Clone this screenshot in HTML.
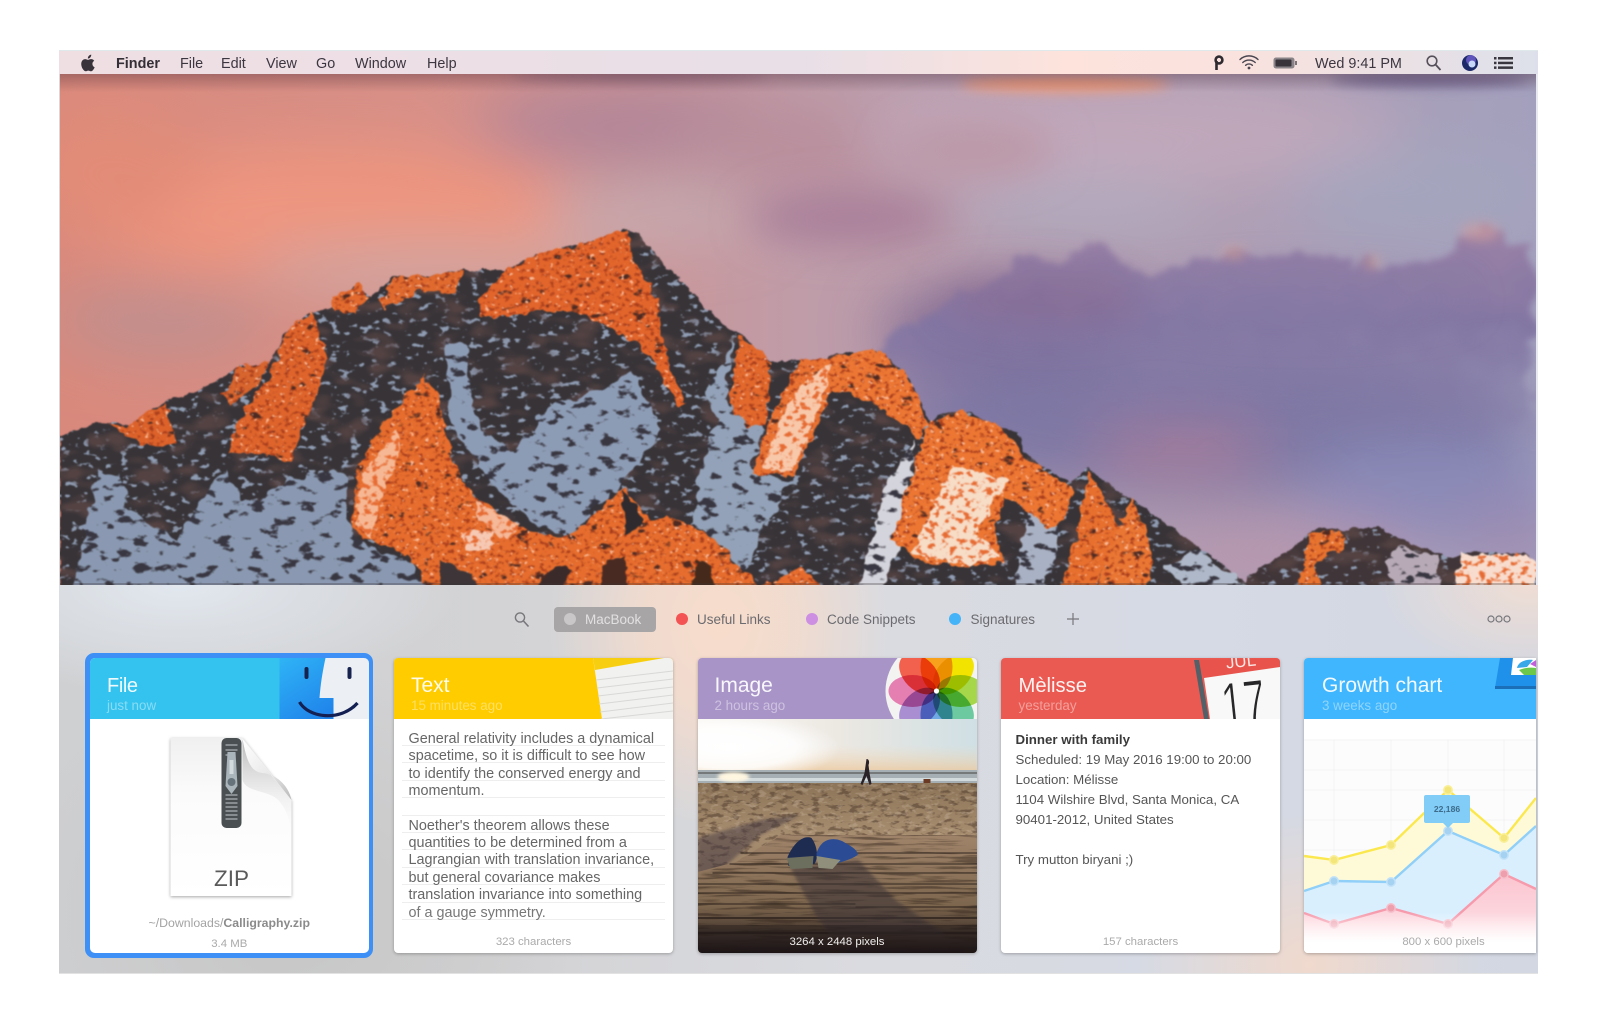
<!DOCTYPE html>
<html><head><meta charset="utf-8"><title>Finder</title>
<style>
html,body{margin:0;padding:0;background:#fff;width:1600px;height:1015px;overflow:hidden}
body{position:relative;font-family:"Liberation Sans",sans-serif}
.a{position:absolute;white-space:nowrap}
#bar{position:absolute;left:59px;top:50px;width:1479px;height:24px;background:linear-gradient(90deg,#efdfe3 0,#ecdfe6 30%,#e8dfe7 50%,#fde3dc 68%,#fae2de 80%,#dde0ea 100%);border-top:1px solid #dfe8ea;box-sizing:border-box}
.m{position:absolute;top:55px;font-size:14.4px;line-height:18px;color:#3c3640;white-space:nowrap}
#panel{position:absolute;left:59px;top:585px;width:1479px;height:389px;overflow:hidden;border-bottom:1px solid #e2e2e2;box-sizing:border-box;
background:
radial-gradient(ellipse 170px 200px at 660px 40px,#f8dccb 0,rgba(248,220,203,.75) 45%,rgba(248,220,203,0) 100%),
radial-gradient(ellipse 170px 150px at 1250px 380px,#f0d9cd 0,rgba(240,217,205,0) 100%),
radial-gradient(ellipse 150px 90px at 1470px 0,#efddd4 0,rgba(239,221,212,0) 100%),
radial-gradient(ellipse 280px 110px at 120px 0,#e2e8ef 0,rgba(226,232,239,0) 100%),
radial-gradient(ellipse 300px 260px at 230px 330px,#c6c6c6 0,rgba(198,198,198,0) 100%),
linear-gradient(90deg,#cfd0d2 0,#d3d3d5 30%,#dadbe0 55%,#d6dae4 75%,#d3d7e1 100%)}
.card{position:absolute;top:658px;width:279px;height:295px;background:#fff;border-radius:4px;overflow:hidden;box-shadow:0 1px 3px rgba(0,0,0,.28)}
.hd{position:absolute;left:0;top:0;width:100%;height:61px;overflow:hidden}
.t{position:absolute;left:19px;top:14px;font-size:21px;line-height:28px;color:#fff;white-space:nowrap;opacity:.93}
.s{position:absolute;left:19px;top:40px;font-size:13.4px;line-height:16px;color:rgba(255,255,255,.42);white-space:nowrap}
.f{position:absolute;left:0;width:100%;text-align:center;top:276px;font-size:11.4px;line-height:16px;color:#aaa;white-space:nowrap}
.l{position:absolute;left:14.5px;font-size:14.4px;line-height:17px;color:#666;white-space:nowrap}
.e{position:absolute;left:14.5px;font-size:13.3px;line-height:18px;color:#555;white-space:nowrap}
.r{position:absolute;left:8px;width:263px;height:1px;background:#eeeeee}
.tb{position:absolute;top:611px;font-size:13.5px;line-height:18px;color:#6b6b70;white-space:nowrap}
.d{position:absolute;top:613px;width:12px;height:12px;border-radius:50%}
</style></head>
<body style="filter:blur(.35px)">

<svg class="a" style="left:0;top:0" width="1600" height="600" viewBox="0 0 1600 600">
<defs>
<clipPath id="hc"><rect x="60" y="74" width="1476" height="511"/></clipPath>
<linearGradient id="sky" x1="0" x2="1" y1="0" y2="0"><stop offset="0" stop-color="#d9897c"/><stop offset=".3" stop-color="#d6918a"/><stop offset=".5" stop-color="#bf9ca8"/><stop offset="1" stop-color="#a3a0bd"/></linearGradient>
<linearGradient id="cl" x1="0" x2="0" y1="0" y2="1"><stop offset="0" stop-color="#9c82a6"/><stop offset=".45" stop-color="#8276a3"/><stop offset="1" stop-color="#7f78a4" stop-opacity="0"/></linearGradient>
<linearGradient id="topd" x1="0" x2="0" y1="0" y2="1"><stop offset="0" stop-color="#3c1e30" stop-opacity=".32"/><stop offset="1" stop-color="#3c1e30" stop-opacity="0"/></linearGradient>
<filter id="b30" x="-50%" y="-100%" width="200%" height="300%"><feGaussianBlur stdDeviation="30"/></filter>
<filter id="b18" x="-50%" y="-100%" width="200%" height="300%"><feGaussianBlur stdDeviation="20"/></filter>
<filter id="b6" x="-50%" y="-200%" width="200%" height="500%"><feGaussianBlur stdDeviation="6"/></filter>
<filter id="cloud" x="-10%" y="-20%" width="120%" height="140%"><feTurbulence type="fractalNoise" baseFrequency=".035" numOctaves="4" seed="4"/><feDisplacementMap in="SourceGraphic" scale="38" xChannelSelector="R" yChannelSelector="G"/><feGaussianBlur stdDeviation="3.5"/></filter>
<filter id="rg" x="-10%" y="-10%" width="120%" height="120%"><feTurbulence type="fractalNoise" baseFrequency=".1" numOctaves="2" seed="7"/><feDisplacementMap in="SourceGraphic" scale="9" xChannelSelector="R" yChannelSelector="G"/></filter>
<filter id="edge" x="-5%" y="-5%" width="110%" height="110%" color-interpolation-filters="sRGB">
<feTurbulence type="fractalNoise" baseFrequency=".1" numOctaves="3" seed="2" result="n"/>
<feDisplacementMap in="SourceGraphic" in2="n" scale="6" xChannelSelector="R" yChannelSelector="G" result="d"/>
<feTurbulence type="fractalNoise" baseFrequency=".1 .16" numOctaves="3" seed="11" result="t"/>
<feColorMatrix in="t" type="matrix" values="0 0 0 0 .56  0 0 0 0 .61  0 0 0 0 .7  14 0 0 0 -8.7" result="sn"/>
<feComposite in="sn" in2="d" operator="atop" result="o"/>
<feTurbulence type="fractalNoise" baseFrequency=".03 .06" numOctaves="2" seed="17" result="t2"/>
<feColorMatrix in="t2" type="matrix" values="0 0 0 0 .33  0 0 0 0 .26  0 0 0 0 .26  4 0 0 0 -2" result="br"/>
<feComposite in="br" in2="o" operator="atop"/>
</filter>
<filter id="snow" x="-5%" y="-5%" width="110%" height="110%" color-interpolation-filters="sRGB">
<feTurbulence type="fractalNoise" baseFrequency=".07" numOctaves="2" seed="6" result="n"/>
<feDisplacementMap in="SourceGraphic" in2="n" scale="14" xChannelSelector="R" yChannelSelector="G" result="d"/>
<feTurbulence type="fractalNoise" baseFrequency=".06 .11" numOctaves="4" seed="21" result="t"/>
<feColorMatrix in="t" type="matrix" values="0 0 0 0 .22  0 0 0 0 .21  0 0 0 0 .25  12 0 0 0 -7" result="dk"/>
<feComposite in="dk" in2="d" operator="atop"/>
</filter>
<filter id="face" x="-10%" y="-10%" width="120%" height="120%" color-interpolation-filters="sRGB">
<feTurbulence type="fractalNoise" baseFrequency=".09" numOctaves="2" seed="3" result="n"/>
<feDisplacementMap in="SourceGraphic" in2="n" scale="11" xChannelSelector="R" yChannelSelector="G" result="d"/>
<feTurbulence type="fractalNoise" baseFrequency=".2 .26" numOctaves="3" seed="8" result="t"/>
<feColorMatrix in="t" type="matrix" values="0 0 0 0 .66  0 0 0 0 .24  0 0 0 0 .11  6 0 0 0 -3.3" result="dk"/>
<feComposite in="dk" in2="d" operator="atop" result="o"/>
<feTurbulence type="fractalNoise" baseFrequency=".06 .1" numOctaves="3" seed="41" result="t3"/>
<feColorMatrix in="t3" type="matrix" values="0 0 0 0 .3  0 0 0 0 .16  0 0 0 0 .13  10 0 0 0 -6.8" result="rk"/>
<feComposite in="rk" in2="o" operator="atop" result="o2"/>
<feTurbulence type="fractalNoise" baseFrequency=".2 .26" numOctaves="2" seed="31" result="t2"/>
<feColorMatrix in="t2" type="matrix" values="0 0 0 0 .98  0 0 0 0 .72  0 0 0 0 .58  12 0 0 0 -8" result="hl"/>
<feComposite in="hl" in2="o2" operator="atop"/>
</filter>
<filter id="pale" x="-10%" y="-10%" width="120%" height="120%" color-interpolation-filters="sRGB">
<feTurbulence type="fractalNoise" baseFrequency=".1" numOctaves="2" seed="9" result="n"/>
<feDisplacementMap in="SourceGraphic" in2="n" scale="10" xChannelSelector="R" yChannelSelector="G" result="d"/>
<feTurbulence type="fractalNoise" baseFrequency=".14 .18" numOctaves="3" seed="14" result="t"/>
<feColorMatrix in="t" type="matrix" values="0 0 0 0 .9  0 0 0 0 .42  0 0 0 0 .2  9 0 0 0 -4.9" result="dk"/>
<feComposite in="dk" in2="d" operator="atop"/>
</filter>
</defs>
<g clip-path="url(#hc)">
<rect x="60" y="74" width="1476" height="511" fill="url(#sky)"/>
<g filter="url(#b30)">
<ellipse cx="330" cy="215" rx="250" ry="70" fill="#ee957f"/>
<ellipse cx="110" cy="170" rx="90" ry="60" fill="#e28c78"/>
<ellipse cx="640" cy="125" rx="170" ry="38" fill="#b08498"/>
<ellipse cx="440" cy="272" rx="190" ry="30" fill="#cfa6a2"/>
<ellipse cx="650" cy="215" rx="110" ry="24" fill="#c5adb4"/>
<ellipse cx="160" cy="320" rx="110" ry="36" fill="#bf8f8f"/>
<ellipse cx="800" cy="150" rx="130" ry="44" fill="#b98f9c"/>
<ellipse cx="1130" cy="135" rx="270" ry="50" fill="#c1a8bb"/>
<ellipse cx="1420" cy="190" rx="130" ry="45" fill="#a4a5be"/>
<ellipse cx="1080" cy="210" rx="130" ry="26" fill="#aeaabf"/>
</g>
<g filter="url(#b18)">
<ellipse cx="850" cy="218" rx="100" ry="26" fill="#a97f9a"/>
<ellipse cx="975" cy="150" rx="80" ry="26" fill="#bb97a6"/>
</g>
<g filter="url(#b6)">
<ellipse cx="1065" cy="84" rx="105" ry="8" fill="#ee9a78"/>
<ellipse cx="1430" cy="80" rx="100" ry="7" fill="#7a7098"/>
<ellipse cx="640" cy="76" rx="130" ry="3" fill="#8a6478"/>
</g>
<g filter="url(#b30)">
<ellipse cx="1210" cy="420" rx="320" ry="80" fill="#7e78a4"/>
<ellipse cx="1180" cy="445" rx="90" ry="32" fill="#a27b9b"/>
<ellipse cx="1430" cy="490" rx="130" ry="50" fill="#8a8ab8"/>
<ellipse cx="1290" cy="555" rx="130" ry="36" fill="#b897ae"/>
<ellipse cx="1510" cy="540" rx="60" ry="30" fill="#a08cb0"/>
<ellipse cx="1000" cy="330" rx="120" ry="34" fill="#74608e"/>
</g>
<polygon filter="url(#cloud)" fill="url(#cl)" points="880,345 915,325 968,293 1000,270 1030,253 1060,268 1090,240 1105,238 1126,270 1160,268 1200,258 1234,247 1260,258 1310,252 1345,262 1371,257 1400,270 1440,255 1484,222 1510,238 1536,242 1536,450 870,450"/>
<g filter="url(#b18)" opacity=".55">
<ellipse cx="1050" cy="300" rx="110" ry="28" fill="#86688f"/>
<ellipse cx="1300" cy="300" rx="170" ry="26" fill="#867ca6"/>
</g>
<g filter="url(#b6)" opacity=".7"><ellipse cx="1234" cy="253" rx="11" ry="4" fill="#f0b090"/><ellipse cx="1372" cy="262" rx="7" ry="6" fill="#d8a090"/><ellipse cx="1480" cy="232" rx="20" ry="9" fill="#cf9c9e"/></g>
<rect x="60" y="74" width="1476" height="18" fill="url(#topd)"/>

<g style="filter:blur(.7px)">
<!-- far right range -->
<polygon filter="url(#edge)" fill="#403538" points="1240,590 1249,575 1290,550 1318,527 1341,530 1379,527 1402,540 1438,553 1453,557 1463,552 1524,553 1536,563 1540,590"/>
<polygon filter="url(#snow)" fill="#b7aab6" points="1385,565 1402,545 1438,558 1440,590 1395,590"/>
<polygon filter="url(#pale)" fill="#f8dccd" points="1452,590 1463,553 1524,554 1537,565 1537,590"/>
<polygon filter="url(#face)" fill="#e8732f" points="1297,590 1310,533 1341,530 1346,549 1316,560 1320,590"/>

<!-- main massif -->
<polygon filter="url(#edge)" fill="#373337" points="60,436 97,423 130,425 166,400 194,393 240,367 270,363 286,333 311,312 327,310 342,300 357,285 370,298 393,277 434,275 462,270 505,270 541,253 587,243 625,230 638,233 663,263 699,300 730,330 742,335 770,362 800,360 815,370 830,357 869,350 892,360 910,380 930,423 938,415 963,410 999,427 1019,433 1024,453 1070,483 1088,468 1126,497 1137,502 1198,547 1249,585 1249,592 60,592"/>

<!-- snow fields -->
<polygon filter="url(#snow)" fill="#8a99b1" points="72,592 84,530 98,470 120,476 130,510 175,540 200,500 226,470 240,500 262,500 290,480 320,470 345,475 350,530 372,548 410,562 430,592"/>
<polygon filter="url(#snow)" fill="#8d9cb5" points="445,340 465,345 470,390 483,432 515,452 550,405 590,395 632,372 662,430 620,487 567,538 530,522 490,482 452,425"/>
<polygon filter="url(#snow)" fill="#93a2b8" points="733,343 707,385 716,420 700,470 693,525 745,572 790,480 752,470 762,425 725,400"/>
<polygon filter="url(#snow)" fill="#aeb8c8" points="1165,565 1198,548 1249,590 1185,590"/>
<polygon filter="url(#snow)" fill="#d4d4dc" points="858,588 885,488 915,440 905,540 880,590"/>
<polygon filter="url(#snow)" fill="#a9b2c4" points="1030,500 1062,492 1055,560 1040,590 1015,590"/>

<!-- lit faces -->
<g filter="url(#face)">
<polygon fill="#dc622a" points="125,427 166,403 176,445 148,447 108,425"/>
<polygon fill="#de642b" points="226,452 245,408 270,377 286,333 311,312 327,350 316,400 301,430 291,460 255,453"/>
<polygon fill="#d8652e" points="240,367 270,363 262,380 232,405 222,395"/>
<polygon fill="#e26a2e" points="332,298 357,285 370,298 356,312 335,312"/>
<polygon fill="#e06a2e" points="380,300 393,277 434,275 462,270 455,295 420,290 385,310"/>
<polygon fill="#e66d2d" points="352,527 357,467 388,417 423,377 439,393 449,450 470,493 507,523 550,537 570,537 623,488 650,520 667,515 703,530 717,543 750,577 760,592 430,592 408,555 367,540"/>
<polygon fill="#e2652b" points="478,300 510,267 541,253 587,243 625,230 635,265 657,300 660,333 673,377 688,403 680,407 670,393 653,360 637,343 607,325 573,313 540,310 503,317 483,317"/>
<polygon fill="#e2682c" points="728,405 740,335 772,362 766,425 748,425"/>
<polygon fill="#e97232" points="753,473 773,413 787,383 800,360 840,357 823,413 793,477"/>
<polygon fill="#ec7633" points="802,383 818,370 830,357 869,350 892,360 910,380 928,423 920,437 892,417 861,397 830,390 810,385"/>
<polygon fill="#ec7632" points="892,540 928,423 963,410 1004,428 1019,453 1073,490 1065,520 1050,527 1004,497 994,533 1004,563 968,567 922,563"/>
<polygon fill="#e8702e" points="1060,592 1078,533 1088,470 1111,507 1121,533 1093,592"/>
<polygon fill="#ea7633" points="1096,592 1111,547 1132,497 1152,547 1147,592"/>
<polygon fill="#e66c2e" points="750,592 790,572 803,567 820,583 825,592"/>
</g>
<g filter="url(#pale)">
<polygon fill="#f8c8aa" points="762,470 780,420 800,385 832,362 818,410 792,472"/>
<polygon fill="#f7dcc6" points="912,553 953,465 1009,480 975,533 1002,555 968,565"/>
<polygon fill="#f6b894" points="356,525 362,478 395,430 402,445 380,500 372,540"/>
<polygon fill="#f6c9b4" points="462,532 492,530 490,550 464,552"/>
<polygon fill="#f5b898" points="475,500 520,525 505,540 478,520"/>
</g>
<g filter="url(#rg)" fill="#2f2a2e">
<polygon points="623,489 642,518 636,530 625,535"/>
<polygon points="533,592 555,566 572,570 560,592" fill="#3b2c2a"/>
<polygon points="600,592 606,560 626,557 628,592" fill="#4a2a22"/>
<polygon points="690,592 698,560 712,565 714,592" fill="#44291f"/>
<polygon points="440,592 440,560 470,575 480,592" fill="#3d3438"/>
</g>
</g>
<rect x="60" y="583" width="1476" height="2" fill="#3a3436" opacity=".3"/>
</g>
</svg>

<div style="position:absolute;left:59px;top:74px;width:1px;height:511px;background:#d8d8dc"></div>
<div style="position:absolute;left:1536px;top:74px;width:2px;height:511px;background:#e8e8f0"></div>

<div id="bar"></div>
<svg class="a" style="left:78px;top:53px" width="20" height="20" viewBox="0 0 24 24"><path fill="#38323a" d="M18.7 19.5c-.8 1.2-1.7 2.4-3 2.4-1.4 0-1.8-.8-3.3-.8-1.6 0-2 .8-3.3.8-1.4 0-2.4-1.3-3.2-2.5C4.2 17 3 12.7 4.7 9.7c.9-1.5 2.4-2.4 4-2.4 1.3 0 2.5.9 3.3.9.8 0 2.2-1.1 3.8-.9.7 0 2.5.3 3.7 2-.1.1-2.2 1.3-2.2 3.8 0 3 2.6 4 2.6 4 0 .1-.4 1.4-1.2 2.4zM13 3.5c.7-.8 1.9-1.5 2.9-1.5.1 1.2-.4 2.4-1.1 3.2-.7.8-1.8 1.5-3 1.4-.1-1.2.5-2.4 1.2-3.1z"/></svg>
<div class="m" style="left:116px;font-weight:bold;color:#342e36">Finder</div>
<div class="m" style="left:180px">File</div>
<div class="m" style="left:221px">Edit</div>
<div class="m" style="left:266px">View</div>
<div class="m" style="left:316px">Go</div>
<div class="m" style="left:355px">Window</div>
<div class="m" style="left:427px">Help</div>
<div class="m" style="left:1315px">Wed 9:41 PM</div>

<svg class="a" style="left:1210px;top:50px" width="320" height="24" viewBox="1210 50 320 24">
<circle cx="1219" cy="60" r="3.4" fill="none" stroke="#2e2a30" stroke-width="2.6"/><path d="M1216.5 61V70" stroke="#2e2a30" stroke-width="2.6" fill="none"/>
<g fill="none" stroke="#4a4650" stroke-width="1.4" stroke-linecap="round"><path d="M1240 59.5a13 13 0 0 1 18 0"/><path d="M1242.8 62.5a9 9 0 0 1 12.4 0"/><path d="M1245.6 65.3a5 5 0 0 1 6.8 0"/></g><circle cx="1249" cy="68" r="1.4" fill="#4a4650"/>
<rect x="1273.5" y="57.5" width="21" height="11" rx="2.5" fill="#8a8488"/><rect x="1275.5" y="59.5" width="16" height="7" rx="1" fill="#38343a"/><rect x="1295" y="61" width="2" height="4" fill="#7a7478"/>
<circle cx="1432" cy="61" r="4.8" fill="none" stroke="#55505a" stroke-width="1.6"/><path d="M1435.5 64.5l5 5.5" stroke="#55505a" stroke-width="1.8"/>
<circle cx="1470" cy="63" r="8" fill="#1c2a6a"/><circle cx="1471" cy="60" r="5" fill="#7060d0" opacity=".8"/><circle cx="1472" cy="64" r="3.5" fill="#c8d8f8"/>
<g fill="#3a3640"><rect x="1494" y="57" width="2.5" height="2.5"/><rect x="1494" y="61.7" width="2.5" height="2.5"/><rect x="1494" y="66.4" width="2.5" height="2.5"/><rect x="1498" y="57" width="15" height="2.5"/><rect x="1498" y="61.7" width="15" height="2.5"/><rect x="1498" y="66.4" width="15" height="2.5"/></g>
</svg>

<div id="panel"></div>

<!-- toolbar -->
<svg class="a" style="left:510px;top:608px" width="24" height="24"><circle cx="10" cy="9.5" r="4.6" fill="none" stroke="#77777c" stroke-width="1.4"/><path d="M13.5 13l5 5.5" stroke="#77777c" stroke-width="1.6"/></svg>
<div class="a" style="left:554px;top:607px;width:102px;height:25px;border-radius:4px;background:#a7a5a5"></div>
<div class="d" style="left:564px;background:#c9c7c7"></div>
<div class="tb" style="left:585px;color:#e2e0e0">MacBook</div>
<div class="d" style="left:676px;background:#f35352"></div>
<div class="tb" style="left:697px">Useful Links</div>
<div class="d" style="left:806px;background:#cc8fe2"></div>
<div class="tb" style="left:827px">Code Snippets</div>
<div class="d" style="left:949px;background:#45b3f8"></div>
<div class="tb" style="left:970.5px">Signatures</div>
<svg class="a" style="left:1066px;top:612px" width="14" height="14"><path d="M7 1v12M1 7h12" stroke="#77777c" stroke-width="1.2"/></svg>
<svg class="a" style="left:1486px;top:614px" width="28" height="10"><g fill="none" stroke="#77777c" stroke-width="1.2"><circle cx="5" cy="5" r="3"/><circle cx="13" cy="5" r="3"/><circle cx="21" cy="5" r="3"/></g></svg>

<!-- File card -->
<div class="a" style="left:85px;top:653px;width:288px;height:305px;box-sizing:border-box;border:4.5px solid #3f90f6;border-radius:9px;background:#3f90f6"></div>
<div class="card" style="left:89.5px;width:279.5px;border-radius:5px;box-shadow:none">
<div class="hd" style="background:#33c3ee">
<div class="t" style="left:17.5px;font-size:20px;letter-spacing:-.4px">File</div><div class="s" style="left:17.5px">just now</div>
<svg style="position:absolute;left:0;top:0" width="280" height="61" viewBox="89.5 658 280 61">
<defs><linearGradient id="fb" x1="0" x2="1" y1="0" y2="1"><stop offset="0" stop-color="#2fb4f6"/><stop offset="1" stop-color="#1a72e6"/></linearGradient></defs>
<rect x="279" y="658" width="91" height="61" fill="url(#fb)"/>
<path d="M325 658C322 672 320 684 319 698H333V719H370V658Z" fill="#eceff4"/>
<rect x="304" y="667" width="4" height="12" rx="2" fill="#16234e"/>
<rect x="347" y="667" width="4" height="12" rx="2" fill="#16234e"/>
<path d="M299 702C308 718 340 722 357 703" fill="none" stroke="#141f52" stroke-width="3.2"/>
</svg>
</div>
<svg style="position:absolute;left:0;top:61px" width="280" height="234" viewBox="89.5 719 280 234">
<defs>
<linearGradient id="fd" x1="0" x2="0" y1="0" y2="1"><stop offset="0" stop-color="#f0f0f0"/><stop offset=".35" stop-color="#fbfbfb"/><stop offset="1" stop-color="#fff"/></linearGradient>
<linearGradient id="fold" x1="0" x2="1" y1="0" y2="1"><stop offset="0" stop-color="#fff"/><stop offset=".55" stop-color="#e9e9e9"/><stop offset="1" stop-color="#b9b9b9"/></linearGradient>
<linearGradient id="fs" x1="0" x2="0" y1="0" y2="1"><stop offset="0" stop-color="#9a9a9a"/><stop offset="1" stop-color="#fff" stop-opacity="0"/></linearGradient>
</defs>
<path d="M170 738H242L291 800V896H170Z" fill="url(#fd)" style="filter:drop-shadow(0 1px 1.5px rgba(0,0,0,.35))"/>
<path d="M242 740L291 800V840C290 815 282 800 270 795C258 790 245 790 242 780Z" fill="url(#fs)" opacity=".65"/>
<path d="M242 739C246 760 250 772 262 773C275 774 288 785 291 800Z" fill="url(#fold)"/>
<rect x="221" y="738" width="20" height="90" rx="5" fill="#4a4f52"/>
<path d="M225 745h12M225 750h12M225 755h8M225 795h12M225 799h12M225 803h12M225 807h12M225 811h12M225 815h12M225 819h12" stroke="#9aa0a4" stroke-width="1.6"/>
<path d="M227 752h8l2 34-6 8-6-8z" fill="#a9b5ba"/><circle cx="231" cy="782" r="4" fill="#66737a"/><rect x="229" y="760" width="4" height="14" fill="#d3dadd"/>
<text x="231" y="886" text-anchor="middle" font-family="Liberation Sans" font-size="22.5" fill="#5a5a5a">ZIP</text>
</svg>
<div class="a" style="left:0;width:100%;text-align:center;top:257px;font-size:12.3px;line-height:16px;color:#a3a3a3">~/Downloads/<b style="color:#8b8b8b">Calligraphy.zip</b></div>
<div class="a" style="left:0;width:100%;text-align:center;top:278px;font-size:11.4px;line-height:16px;color:#aaa">3.4 MB</div>
</div>

<!-- Text card -->
<div class="card" style="left:394px">
<div class="hd" style="background:#ffcc00">
<div class="t" style="left:17px">Text</div><div class="s" style="left:17px;color:rgba(255,255,255,.38)">15 minutes ago</div>
<svg style="position:absolute;left:0;top:0" width="279" height="61" viewBox="394 658 279 61">
<polygon points="593,658 673,658 673,719 602,719" fill="#f1f1ef"/>
<g stroke="#d8d8d6" stroke-width="1"><path d="M596 680L673 671"/><path d="M597 688L673 679"/><path d="M598 696L673 687"/><path d="M599 704L673 695"/><path d="M600 712L673 703"/><path d="M601 719L673 711"/></g>
<polygon points="593,658 664,658 595,670" fill="#f7cf10"/>
</svg>
</div>
<div class="r" style="top:87px"></div><div class="r" style="top:104px"></div><div class="r" style="top:122px"></div><div class="r" style="top:139px"></div><div class="r" style="top:157px"></div><div class="r" style="top:174px"></div><div class="r" style="top:191px"></div><div class="r" style="top:209px"></div><div class="r" style="top:226px"></div><div class="r" style="top:244px"></div><div class="r" style="top:261px"></div>
<div class="l" style="top:73px">General relativity includes a dynamical</div>
<div class="l" style="top:90.4px">spacetime, so it is difficult to see how</div>
<div class="l" style="top:107.8px">to identify the conserved energy and</div>
<div class="l" style="top:125.2px">momentum.</div>
<div class="l" style="top:159.5px">Noether's theorem allows these</div>
<div class="l" style="top:176.9px">quantities to be determined from a</div>
<div class="l" style="top:194.3px">Lagrangian with translation invariance,</div>
<div class="l" style="top:211.7px">but general covariance makes</div>
<div class="l" style="top:229.1px">translation invariance into something</div>
<div class="l" style="top:246.5px;color:#777">of a gauge symmetry.</div>
<div class="f">323 characters</div>
</div>

<!-- Image card -->
<div class="card" style="left:697.5px">
<svg style="position:absolute;left:0;top:61px" width="280" height="234" viewBox="697.5 719 280 234">
<defs>
<linearGradient id="ps" x1="0" x2="1" y1="0" y2="0"><stop offset="0" stop-color="#fbf8f4"/><stop offset=".5" stop-color="#ece8e2"/><stop offset="1" stop-color="#cfdfe4"/></linearGradient>
<linearGradient id="ps2" x1="0" x2="0" y1="0" y2="1"><stop offset="0" stop-color="#f0dcc0" stop-opacity="0"/><stop offset="1" stop-color="#ecc89c" stop-opacity=".8"/></linearGradient>
<radialGradient id="pg"><stop offset="0" stop-color="#fff"/><stop offset=".6" stop-color="#fff" stop-opacity=".85"/><stop offset="1" stop-color="#fff" stop-opacity="0"/></radialGradient>
<linearGradient id="pd" x1="0" x2="0" y1="0" y2="1"><stop offset="0" stop-color="#a0846a"/><stop offset=".6" stop-color="#7d664e"/><stop offset="1" stop-color="#1e1618"/></linearGradient>
<linearGradient id="pb" x1="0" x2="0" y1="0" y2="1"><stop offset="0" stop-color="#8c7458"/><stop offset=".5" stop-color="#a88e70"/><stop offset="1" stop-color="#907a62"/></linearGradient>
<filter id="sand" x="0" y="0" width="1" height="1" color-interpolation-filters="sRGB"><feTurbulence type="fractalNoise" baseFrequency=".1 .22" numOctaves="3" seed="5"/><feColorMatrix type="matrix" values="0 0 0 0 .3  0 0 0 0 .22  0 0 0 0 .17  6 0 0 0 -3.1"/></filter>
<filter id="sand2" x="0" y="0" width="1" height="1" color-interpolation-filters="sRGB"><feTurbulence type="fractalNoise" baseFrequency=".12 .25" numOctaves="3" seed="15"/><feColorMatrix type="matrix" values="0 0 0 0 .85  0 0 0 0 .78  0 0 0 0 .7  7 0 0 0 -3.9"/></filter>
<filter id="deck" x="0" y="0" width="1" height="1" color-interpolation-filters="sRGB"><feTurbulence type="fractalNoise" baseFrequency=".02 .3" numOctaves="3" seed="25"/><feColorMatrix type="matrix" values="0 0 0 0 .18  0 0 0 0 .13  0 0 0 0 .1  5 0 0 0 -2.5"/></filter>
<filter id="sh" x="-30%" y="-30%" width="160%" height="160%"><feGaussianBlur stdDeviation="1.6"/></filter>
</defs>
<rect x="697" y="719" width="281" height="52" fill="url(#ps)"/>
<rect x="697" y="745" width="281" height="26" fill="url(#ps2)"/>
<ellipse cx="730" cy="748" rx="110" ry="34" fill="url(#pg)"/>
<rect x="697" y="770" width="281" height="14" fill="#a6b0b4"/>
<rect x="697" y="772" width="281" height="2" fill="#75797a"/>
<rect x="697" y="778" width="281" height="3" fill="#d2dadc"/>
<ellipse cx="733" cy="777" rx="16" ry="5" fill="#fff6e0" filter="url(#sh)"/>
<rect x="697" y="783" width="281" height="105" fill="url(#pb)"/>
<rect x="697" y="783" width="281" height="105" filter="url(#sand)" opacity=".5"/>
<rect x="697" y="783" width="281" height="52" filter="url(#sand2)" opacity=".25"/>
<polygon points="697,838 760,820 800,815 760,835 720,870 697,875" fill="#3f3640" opacity=".5" filter="url(#sh)"/>
<polygon points="697,890 697,872 735,862 780,835 978,835 978,953 697,953" fill="url(#pd)"/>
<rect x="697" y="835" width="281" height="118" filter="url(#deck)" opacity=".45" clip-path="polygon(0 100%,0 33%,14% 23%,30% 0,100% 0,100% 100%)"/>
<g stroke="#2a201b" stroke-width="1.2" fill="none" opacity=".75">
<path d="M740 853H978"/><path d="M729 864H978"/><path d="M712 873H978"/><path d="M697 884H978"/><path d="M697 893H978"/><path d="M697 904H855M855 907H978"/><path d="M697 918H978" stroke-width="2"/><path d="M697 933H978" stroke-width="2.4"/>
</g>
<polygon points="790,868 858,860 895,900 945,935 830,935 815,915" fill="#3a3036" opacity=".55" filter="url(#sh)"/>
<rect x="697" y="925" width="281" height="28" fill="#181014" opacity=".35"/>
<path d="M866 759c3 0 3 4 2 6l1 8 2 11-2 1-3-9-4 9-2-1 4-11z" fill="#2a2226"/>
<rect x="923" y="779" width="7" height="4" fill="#6a3a24"/>
<path d="M787 857C794 841 804 835 811 838C817 846 818 858 814 864L788 866Z" fill="#1f2c52"/>
<path d="M816 854C820 838 834 836 845 843C852 847 858 851 857 855C850 860 840 862 834 864L818 866Z" fill="#2b4c94"/>
<path d="M786 858L813 856L812 868L790 869Z" fill="#6c6e5e"/><path d="M816 856L840 860L832 869L818 868Z" fill="#8f8f7c"/>
</svg>
<div class="hd" style="background:#a994c8">
<div class="t" style="left:17px">Image</div><div class="s" style="left:17px">2 hours ago</div>
<svg style="position:absolute;left:0;top:0" width="280" height="61" viewBox="697.5 658 280 61">
<circle cx="936" cy="691" r="51" fill="#f3f3f1"/>
<g style="isolation:isolate">
<ellipse style="mix-blend-mode:multiply" cx="936" cy="667" rx="16" ry="24" fill="#f7a11c"/>
<ellipse style="mix-blend-mode:multiply" cx="936" cy="667" rx="16" ry="24" fill="#f2e300" transform="rotate(45 936 691)"/>
<ellipse style="mix-blend-mode:multiply" cx="936" cy="667" rx="16" ry="24" fill="#a6d64a" transform="rotate(90 936 691)"/>
<ellipse style="mix-blend-mode:multiply" cx="936" cy="667" rx="16" ry="24" fill="#6dc9a0" transform="rotate(135 936 691)"/>
<ellipse style="mix-blend-mode:multiply" cx="936" cy="667" rx="16" ry="24" fill="#6fa8e2" transform="rotate(180 936 691)"/>
<ellipse style="mix-blend-mode:multiply" cx="936" cy="667" rx="16" ry="24" fill="#a98fd2" transform="rotate(225 936 691)"/>
<ellipse style="mix-blend-mode:multiply" cx="936" cy="667" rx="16" ry="24" fill="#e57fb2" transform="rotate(270 936 691)"/>
<ellipse style="mix-blend-mode:multiply" cx="936" cy="667" rx="16" ry="24" fill="#f2604e" transform="rotate(315 936 691)"/>
</g>
<circle cx="936" cy="691" r="2.6" fill="#fff"/>
</svg>
</div>
<div class="f" style="color:#f0eeee">3264 x 2448 pixels</div>
</div>

<!-- Event card -->
<div class="card" style="left:1001px">
<div class="hd" style="background:#ea5a52">
<div class="t" style="left:17.5px;font-size:20.2px">Mèlisse</div><div class="s" style="left:17.5px">yesterday</div>
<svg style="position:absolute;left:0;top:0" width="279" height="61" viewBox="1001 658 279 61">
<polygon points="1196,660 1280,658 1280,667 1204,678" fill="#e8544c"/>
<polygon points="1204,678 1280,667 1280,719 1210,719" fill="#f8f8f8"/>
<polygon points="1194,660 1199,660 1209,719 1204,719" fill="#546068"/>
<text x="1241" y="667" text-anchor="middle" font-family="Liberation Sans" font-size="17" fill="#fbe7e5" transform="rotate(-6 1241 662)">JUL</text>
<text x="1221" y="731" font-family="Liberation Sans" font-size="72" fill="#262628" stroke="#f8f8f8" stroke-width="1.6" textLength="44" lengthAdjust="spacingAndGlyphs" transform="rotate(-6 1243 700)">17</text>
</svg>
</div>
<div class="e" style="top:73px;font-weight:bold;color:#3a3a3a">Dinner with family</div>
<div class="e" style="top:92.5px">Scheduled: 19 May 2016 19:00 to 20:00</div>
<div class="e" style="top:113px">Location: Mélisse</div>
<div class="e" style="top:132.5px">1104 Wilshire Blvd, Santa Monica, CA</div>
<div class="e" style="top:153px">90401-2012, United States</div>
<div class="e" style="top:193px">Try mutton biryani ;)</div>
<div class="f" style="left:0">157 characters</div>
</div>

<!-- Chart card -->
<div class="a" style="left:1304px;top:658px;width:232px;height:295px;overflow:hidden;border-radius:4px 0 0 4px;box-shadow:0 1px 3px rgba(0,0,0,.28);background:#fff">
<svg style="position:absolute;left:0;top:0" width="232" height="295" viewBox="1304 658 232 295">
<defs><linearGradient id="fade" x1="0" x2="0" y1="0" y2="1"><stop offset="0" stop-color="#fff" stop-opacity="0"/><stop offset="1" stop-color="#fff"/></linearGradient>
<linearGradient id="pk" x1="0" x2="0" y1="0" y2="1"><stop offset="0" stop-color="#fbc4cf"/><stop offset="1" stop-color="#fde3e8"/></linearGradient></defs>
<rect x="1304" y="719" width="232" height="21" fill="#fff"/>
<rect x="1304" y="740" width="232" height="213" fill="#fcfcfc"/>
<g stroke="#f3f3f5" stroke-width="1"><path d="M1334 740V920M1391 740V920M1448 740V920M1504 740V920"/><path d="M1304 740H1536M1304 770H1536M1304 790H1536M1304 820H1536M1304 850H1536"/></g>
<polygon points="1304,856 1334,860 1391,845 1448,790 1504,838 1536,798 1536,830 1504,855 1448,831 1391,882 1334,881 1304,891" fill="#fefad8"/>
<polygon points="1304,891 1334,881 1391,882 1448,831 1504,855 1536,826 1536,889 1504,874 1448,924 1391,908 1334,924 1304,913" fill="#d9effe"/>
<polygon points="1304,913 1334,924 1391,908 1448,924 1504,874 1536,889 1536,945 1304,945" fill="url(#pk)"/>
<polyline points="1304,856 1334,860 1391,845 1448,790 1504,838 1536,798" fill="none" stroke="#fbe84e" stroke-width="2.4"/>
<polyline points="1304,891 1334,881 1391,882 1448,831 1504,855 1536,826" fill="none" stroke="#90cff8" stroke-width="2.4"/>
<polyline points="1304,913 1334,924 1391,908 1448,924 1504,874 1536,889" fill="none" stroke="#f69aac" stroke-width="2.4"/>
<g stroke-width="1.5" fill="#f4e57a" stroke="#f9ef9a"><circle cx="1334" cy="860" r="4.2"/><circle cx="1391" cy="845" r="4.2"/><circle cx="1448" cy="790" r="4.2"/><circle cx="1504" cy="838" r="4.2"/></g>
<g stroke-width="1.5" fill="#a6d2f2" stroke="#c2e2f8"><circle cx="1334" cy="881" r="4.2"/><circle cx="1391" cy="882" r="4.2"/><circle cx="1448" cy="831" r="4.2"/><circle cx="1504" cy="855" r="4.2"/></g>
<g stroke-width="1.5" fill="#ee9fae" stroke="#f6c0cb"><circle cx="1334" cy="924" r="4.2"/><circle cx="1391" cy="908" r="4.2"/><circle cx="1448" cy="924" r="4.2"/><circle cx="1504" cy="874" r="4.2"/></g>
<rect x="1304" y="912" width="232" height="30" fill="url(#fade)"/>
<rect x="1304" y="942" width="232" height="11" fill="#fff"/>
<rect x="1424" y="795" width="46" height="28" rx="2" fill="#82cdf8"/>
<polygon points="1443,823 1453,823 1448,828" fill="#82cdf8"/>
<text x="1447" y="812" text-anchor="middle" font-family="Liberation Sans" font-size="8.6" font-weight="bold" fill="#3d6c8a">22,186</text>
</svg>
<div class="hd" style="background:#3fb6fd;width:232px">
<div class="t" style="left:18px">Growth chart</div><div class="s" style="left:18px">3 weeks ago</div>
<svg style="position:absolute;left:0;top:0" width="232" height="61" viewBox="1304 658 232 61">
<polygon points="1500,658 1536,658 1536,688 1495,688" fill="#2091ea"/>
<rect x="1495" y="686" width="41" height="3" fill="#1a6fb8"/>
<polygon points="1513,658 1536,658 1536,675 1511,675" fill="#fff"/>
<path d="M1517 668C1518 662 1526 659 1533 660L1527 667Z" fill="#38a8e8"/>
<path d="M1519 670C1524 668 1530 667 1536 668V675H1524Z" fill="#6cc84a"/>
<path d="M1530 664L1536 660V667Z" fill="#c060d8"/>
</svg>
</div>
<div class="f" style="left:0;width:279px">800 x 600 pixels</div>
</div>

</body></html>
